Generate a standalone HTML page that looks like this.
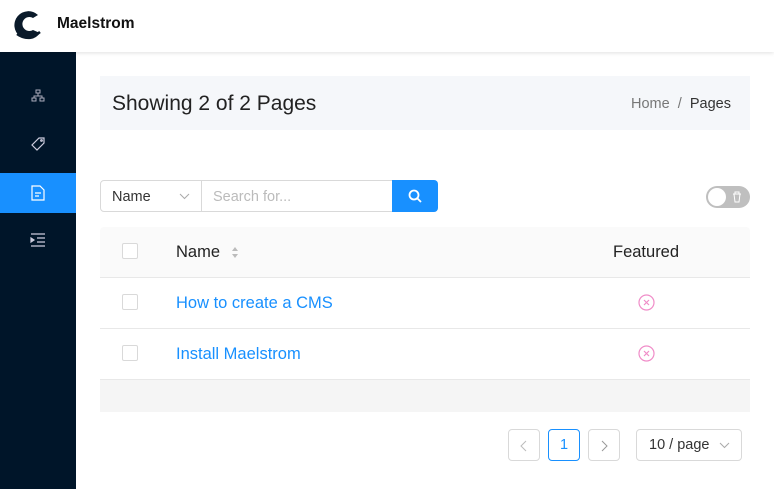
<!DOCTYPE html><html><head><style>
*{box-sizing:border-box;margin:0;padding:0}
body{width:774px;height:489px;overflow:hidden;background:#fff;font-family:"Liberation Sans",sans-serif;position:relative;color:#222}
.hdr{position:absolute;left:0;top:0;width:774px;height:52px;background:#fff;box-shadow:0 1px 4px rgba(0,0,0,.12);z-index:2}
.side{position:absolute;left:0;top:52px;width:76px;height:437px;background:#001529}
.ic{position:absolute;left:0;width:76px;height:40px;display:flex;align-items:center;justify-content:center}
.abs{position:absolute}
</style></head><body>
<div class="hdr">
<svg class="abs" style="left:12px;top:8px" width="30" height="32" viewBox="0 0 30 32"><path d="M26 7 A14 14 0 1 0 28 25 L21 22 A7 7 0 1 1 21 10 Z" fill="#0a1a2a"/><path d="M5 26 Q16 34 28 24" stroke="#0a1a2a" stroke-width="2.5" fill="none"/></svg>
<div class="abs" style="left:57px;top:15px;font-size:15.5px;font-weight:bold;color:#111">Maelstrom</div>
</div>
<div class="side">
<div class="ic" style="top:24px"><svg width="14" height="14" viewBox="0 0 14 14" fill="none" stroke="#aab" stroke-width="1"><rect x="5" y="1" width="4" height="3"/><rect x="1" y="9" width="4" height="3"/><rect x="9" y="9" width="4" height="3"/><path d="M7 4v3M3 9V7h8v2"/></svg></div>
<div class="ic" style="top:72px"><svg width="16" height="16" viewBox="0 0 16 16" fill="none" stroke="#ccd" stroke-width="1.2"><path d="M9 2h5v5l-7 7-5-5z"/><circle cx="11.5" cy="4.5" r=".8"/></svg></div>
<div class="ic" style="top:121px;background:#1890ff"><svg width="14" height="16" viewBox="0 0 14 16" fill="none" stroke="#fff" stroke-width="1.2"><path d="M1 1h8l4 4v10H1z M4 8h6M4 11h4"/></svg></div>
<div class="ic" style="top:168px"><svg width="16" height="14" viewBox="0 0 16 14" fill="none" stroke="#ccd" stroke-width="1.2"><path d="M1 1h14M7 5h8M7 9h8M1 13h14"/><path d="M1 5l3 2-3 2z" fill="#ccd"/></svg></div>
</div>
<div class="abs" style="left:100px;top:76px;width:650px;height:54px;background:#f5f7fa"></div>
<div class="abs" style="left:112px;top:92px;font-size:21px;color:#222">Showing 2 of 2 Pages</div>
<div class="abs" style="left:631px;top:96px;font-size:14.5px;color:#777">Home &nbsp;/&nbsp; <span style="color:#333">Pages</span></div>
<div class="abs" style="left:100px;top:180px;width:102px;height:32px;border:1px solid #d9d9d9;border-radius:4px 0 0 4px;font-size:14.5px;padding:8px 11px;color:#333">Name<svg class="abs" style="left:78px;top:12px" width="11" height="7"><path d="M1 1l4.5 4.5L10 1" stroke="#aaa" fill="none"/></svg></div>
<div class="abs" style="left:201px;top:180px;width:192px;height:32px;border:1px solid #d9d9d9;font-size:14.5px;padding:8px 11px;color:#bbb">Search for...</div>
<div class="abs" style="left:392px;top:180px;width:46px;height:32px;background:#1890ff;border-radius:0 4px 4px 0"><svg class="abs" style="left:16px;top:9px" width="14" height="14" fill="none" stroke="#fff" stroke-width="1.8"><circle cx="6" cy="6" r="4.5"/><path d="M9.5 9.5l3.5 3.5"/></svg></div>
<div class="abs" style="left:706px;top:186px;width:44px;height:22px;border-radius:11px;background:#bfbfbf"><div class="abs" style="left:2px;top:2px;width:18px;height:18px;border-radius:50%;background:#fff"></div><svg class="abs" style="left:26px;top:5px" width="10" height="12" fill="none" stroke="#fff"><path d="M1 3h8M3 3V1h4v2M2 3l1 8h4l1-8"/></svg></div>
<div class="abs" style="left:100px;top:227px;width:650px;height:51px;background:#fafafa;border-bottom:1px solid #e8e8e8;border-radius:4px 4px 0 0"></div>
<div class="abs" style="left:122px;top:243px;width:16px;height:16px;border:1px solid #d9d9d9;background:#fff;border-radius:2px"></div>
<div class="abs" style="left:176px;top:243px;font-size:16.5px;color:#222">Name</div>
<svg class="abs" style="left:231px;top:246px" width="8" height="13"><path d="M4 1l3 4H1zM4 12l3-4H1z" fill="#bbb"/></svg>
<div class="abs" style="left:613px;top:243px;font-size:16.5px;color:#222">Featured</div>
<div class="abs" style="left:100px;top:278px;width:650px;height:51px;border-bottom:1px solid #e8e8e8"></div>
<div class="abs" style="left:122px;top:294px;width:16px;height:16px;border:1px solid #d9d9d9;border-radius:2px"></div>
<div class="abs" style="left:176px;top:294px;font-size:16.5px;color:#1890ff">How to create a CMS</div>
<svg class="abs" style="left:638px;top:294px" width="17" height="17" fill="none" stroke="#f08cc8" stroke-width="1.2"><circle cx="8.5" cy="8.5" r="7.5"/><path d="M6 6l5 5M11 6l-5 5"/></svg>
<div class="abs" style="left:100px;top:329px;width:650px;height:51px;border-bottom:1px solid #e8e8e8"></div>
<div class="abs" style="left:122px;top:345px;width:16px;height:16px;border:1px solid #d9d9d9;border-radius:2px"></div>
<div class="abs" style="left:176px;top:345px;font-size:16.5px;color:#1890ff">Install Maelstrom</div>
<svg class="abs" style="left:638px;top:345px" width="17" height="17" fill="none" stroke="#f08cc8" stroke-width="1.2"><circle cx="8.5" cy="8.5" r="7.5"/><path d="M6 6l5 5M11 6l-5 5"/></svg>
<div class="abs" style="left:100px;top:380px;width:650px;height:32px;background:#f5f5f5"></div>
<div class="abs" style="left:508px;top:429px;width:32px;height:32px;border:1px solid #d9d9d9;border-radius:4px"><svg class="abs" style="left:11px;top:10px" width="8" height="12"><path d="M6 1L1 6l5 5" stroke="#bbb" fill="none"/></svg></div>
<div class="abs" style="left:548px;top:429px;width:32px;height:32px;border:1px solid #1890ff;border-radius:4px;color:#1890ff;font-size:14.5px;text-align:center;line-height:30px">1</div>
<div class="abs" style="left:588px;top:429px;width:32px;height:32px;border:1px solid #d9d9d9;border-radius:4px"><svg class="abs" style="left:12px;top:10px" width="8" height="12"><path d="M1 1l5 5-5 5" stroke="#999" fill="none"/></svg></div>
<div class="abs" style="left:636px;top:429px;width:106px;height:32px;border:1px solid #d9d9d9;border-radius:4px;font-size:14.5px;padding:7px 12px;color:#333">10 / page<svg class="abs" style="left:82px;top:12px" width="11" height="7"><path d="M1 1l4.5 4.5L10 1" stroke="#aaa" fill="none"/></svg></div>
</body></html>
